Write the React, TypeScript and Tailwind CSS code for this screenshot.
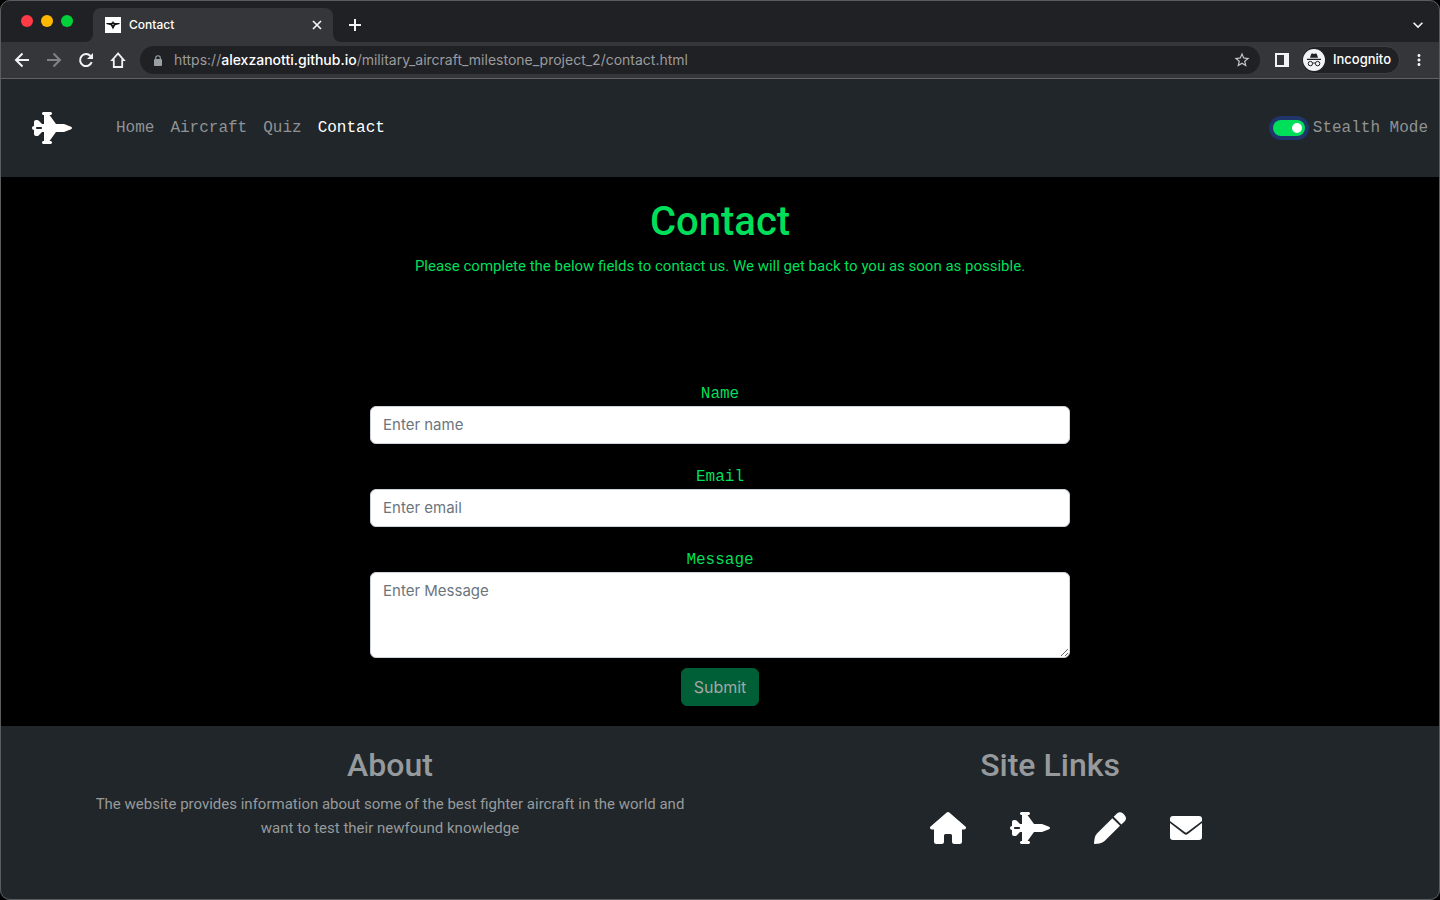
import { useState } from "react";
import type { ReactNode } from "react";
import { FaJetFighter } from "react-icons/fa6";
import { MdStarBorder, MdMoreVert, MdKeyboardArrowDown } from "react-icons/md";

const mono = "font-['Liberation_Mono',monospace]";
const body = "font-['Roboto',sans-serif]";

function ChromeButton({ label, children, className = "" }: { label: string; children: ReactNode; className?: string }) {
  return (
    <button type="button" aria-label={label} className={`flex shrink-0 items-center justify-center text-[#f1f3f4] ${className}`}>
      {children}
    </button>
  );
}

function LineIcon({ children }: { children: ReactNode }) {
  return (
    <svg viewBox="0 0 20 20" className="size-5" fill="none" stroke="currentColor" strokeWidth="2" aria-hidden="true">
      {children}
    </svg>
  );
}

function FaviconIcon() {
  return (
    <svg viewBox="0 0 16 16" className="size-4 bg-white" aria-hidden="true">
      <path d="M8 3.8l.8 1.8 1.4.5 4.3-.1.2 1-4.5 1.2-1.1 2.1L8 12.4l-1.1-2.1-1.1-2.1L1.3 7l.2-1 4.3.1 1.4-.5z" fill="#111" />
      <circle cx="8" cy="7.6" r=".7" fill="#fff" />
    </svg>
  );
}

function LockIcon() {
  return (
    <svg viewBox="0 0 8 11" className="h-[11px] w-2 shrink-0" aria-hidden="true">
      <rect y="4" width="8" height="7" rx="1" fill="#9aa0a6" />
      <path d="M1.7 4.5V3a2.3 2.3 0 0 1 4.6 0v1.5" fill="none" stroke="#9aa0a6" strokeWidth="1.1" />
    </svg>
  );
}

function IncognitoIcon() {
  return (
    <svg viewBox="0 0 22 22" className="size-[22px]" aria-hidden="true">
      <circle cx="11" cy="11" r="11" fill="#f1f3f4" />
      <path d="M7 8.8l1.1-3.6c.2-.7.8-1 1.5-.7l1.4.4 1.4-.4c.7-.3 1.3 0 1.5.7L15 8.8z" fill="#202124" />
      <path d="M4 9.8h14v1.2H4z" fill="#202124" />
      <circle cx="7.4" cy="14.6" r="2.2" fill="none" stroke="#202124" />
      <circle cx="14.6" cy="14.6" r="2.2" fill="none" stroke="#202124" />
      <path d="M9.6 14.4c.9-.6 1.9-.6 2.8 0" fill="none" stroke="#202124" />
    </svg>
  );
}

function HouseIcon() {
  return (
    <svg viewBox="0 0 36 32" className="h-8 w-9" fill="currentColor" aria-hidden="true">
      <path d="M18 0q.7 0 1.3.5L35.4 14.4q1 1 .4 2.2-.5 1-1.8 1H32V29.5q0 2.500-2.500 2.500H24.500Q22 32 22 29.500V23.500Q22 22 20.500 22H15.500Q14 22 14 23.500V29.500Q14 32 11.500 32H6.500Q4 32 4 29.500V17.600H2q-1.300 0-1.800-1-.6-1.200.4-2.200L16.700.5Q17.300 0 18 0z" />
    </svg>
  );
}

function PenIcon() {
  return (
    <svg viewBox="0 0 32 32" className="size-8" fill="currentColor" aria-hidden="true">
      <path d="M18.3 6.2L26 13.8 10.6 29Q8.5 31 5.5 31.4L.8 32Q0 32 0 31.2L.6 26.5Q1 23.6 3 21.5z" />
      <path d="M19.7 4.8L23 1.500Q26-1 29 1.600L30.500 3Q33.200 6 31 9L27.400 12.400z" />
    </svg>
  );
}

function EnvelopeIcon() {
  return (
    <svg viewBox="0 0 32 24" className="h-6 w-8" fill="currentColor" aria-hidden="true">
      <path d="M3 0h26a3 3 0 0 1 3 3v2L17 16.300a1.700 1.700 0 0 1-2 0L0 5V3a3 3 0 0 1 3-3z" />
      <path d="M0 7L14.200 18a2.900 2.900 0 0 0 3.600 0L32 7V21a3 3 0 0 1-3 3H3a3 3 0 0 1-3-3z" />
    </svg>
  );
}

function BrowserBar() {
  return (
    <div className="font-['Inter',sans-serif]">
      <div className="flex h-[42px] items-end bg-[#202124]">
        <div className="flex h-[42px] w-[93px] shrink-0 items-center gap-2 pl-[21px]">
          <span className="size-3 rounded-full bg-[#ff3b47]" />
          <span className="size-3 rounded-full bg-[#ffb900]" />
          <span className="size-3 rounded-full bg-[#00d13b]" />
        </div>
        <div className="relative flex h-[34px] w-60 items-center gap-2 rounded-t-lg bg-[#35363a] px-3">
          <span className="absolute bottom-0 -left-2 size-2 bg-[#35363a]">
            <span className="block size-2 rounded-br-lg bg-[#202124]" />
          </span>
          <span className="absolute -right-2 bottom-0 size-2 bg-[#35363a]">
            <span className="block size-2 rounded-bl-lg bg-[#202124]" />
          </span>
          <FaviconIcon />
          <span className="flex-1 text-xs font-medium text-white">Contact</span>
          <ChromeButton label="Close tab" className="-mr-1.5">
            <LineIcon><path d="M6 6l8 8M14 6l-8 8" strokeWidth="1.7" /></LineIcon>
          </ChromeButton>
        </div>
        <ChromeButton label="New tab" className="ml-3 h-[34px]">
          <LineIcon><path d="M10 4v12M4 10h12" /></LineIcon>
        </ChromeButton>
        <ChromeButton label="Search tabs" className="mr-3 ml-auto h-[34px]">
          <MdKeyboardArrowDown size={20} />
        </ChromeButton>
      </div>
      <div className="flex h-[37px] items-center border-b border-[#5f6164] bg-[#35363a] px-3">
        <div className="flex shrink-0 gap-3">
          <ChromeButton label="Back">
            <LineIcon><path d="M17 10H4.500M10.500 3.500L4 10l6.500 6.500" /></LineIcon>
          </ChromeButton>
          <ChromeButton label="Forward" className="opacity-40">
            <LineIcon><path d="M3 10h12.500M9.500 3.500L16 10l-6.500 6.500" /></LineIcon>
          </ChromeButton>
          <ChromeButton label="Reload">
            <LineIcon>
              <path d="M15.700 12.200A6 6 0 1 1 14.500 6" />
              <path d="M17 3v6h-6z" fill="currentColor" stroke="none" />
            </LineIcon>
          </ChromeButton>
          <ChromeButton label="Home page">
            <LineIcon><path d="M10 3.500L4.200 10.200H5.800V17h8.400v-6.800h1.600z" strokeWidth="1.800" /></LineIcon>
          </ChromeButton>
        </div>
        <div className="ml-3 flex h-7 min-w-0 flex-1 items-center rounded-full bg-[#202124] pr-[9px] pl-[14px]">
          <LockIcon />
          <p className="ml-3 flex-1 truncate text-sm text-[#9a9b9e]">
            https://<span className="font-medium text-white">alexzanotti.github.io</span>/military_aircraft_milestone_project_2/contact.html
          </p>
          <ChromeButton label="Bookmark"><MdStarBorder size={18} className="text-[#c4c6c8]" /></ChromeButton>
        </div>
        <ChromeButton label="Side panel" className="ml-[15px]">
          <svg viewBox="0 0 14 14" className="size-[14px]" aria-hidden="true">
            <path d="M0 0h14v14H0zM2 2v10h7V2z" fill="currentColor" fillRule="evenodd" />
          </svg>
        </ChromeButton>
        <div className="ml-3 flex h-7 shrink-0 items-center gap-2 rounded-full border border-[#3f4044] bg-[#202124] pr-2 pl-px">
          <IncognitoIcon />
          <span className="text-[13px] font-medium text-white">Incognito</span>
        </div>
        <ChromeButton label="Menu" className="ml-[10px]"><MdMoreVert size={18} /></ChromeButton>
      </div>
    </div>
  );
}

const navLinks = [
  { label: "Home", href: "#home" },
  { label: "Aircraft", href: "#aircraft" },
  { label: "Quiz", href: "#quiz" },
];

function SiteHeader() {
  const [stealth, setStealth] = useState(true);
  return (
    <header className={`flex h-[98px] items-center bg-[#202629] pr-3 pl-8 text-base text-[#909294] ${mono}`}>
      <a href="#home" aria-label="Military aircraft" className="mr-11 text-white">
        <FaJetFighter className="h-8 w-10" />
      </a>
      <nav className="flex gap-4">
        {navLinks.map((link) => (
          <a key={link.label} href={link.href}>{link.label}</a>
        ))}
        <a href="#contact" aria-current="page" className="text-white">Contact</a>
      </nav>
      <label className="ml-auto flex items-center gap-2">
        <span className="relative flex h-4 w-8">
          <input
            type="checkbox"
            role="switch"
            checked={stealth}
            onChange={(e) => setStealth(e.target.checked)}
            className="peer h-4 w-8 appearance-none rounded-full bg-[#6c757d] ring-4 ring-[#20366a] checked:bg-[#00df59]"
          />
          <span className="pointer-events-none absolute top-[3px] left-[3px] size-[10px] rounded-full bg-white peer-checked:left-[19px]" />
        </span>
        Stealth Mode
      </label>
    </header>
  );
}

const fieldClass =
  "block w-full rounded-md border border-[#ced4da] bg-white px-3 py-[6px] font-['Inter',sans-serif] text-[15px] leading-6 text-[#212529] placeholder:text-[#6c757d]";
const labelClass = `block text-center text-base leading-6 ${mono}`;

function ContactForm() {
  return (
    <main className="flex-1 bg-black px-4 py-5 text-[#00df59]">
      <h1 className="text-center font-['Roboto',sans-serif] text-[40px] leading-[50px] font-medium">Contact</h1>
      <p className={`mt-[7px] text-center text-[15px] leading-6 ${body}`}>
        Please complete the below fields to contact us. We will get back to you as soon as possible.
      </p>
      <form className="mx-auto mt-[104px] max-w-[700px]" onSubmit={(e) => e.preventDefault()}>
        <label htmlFor="name" className={labelClass}>Name</label>
        <input id="name" type="text" placeholder="Enter name" className={fieldClass} />
        <label htmlFor="email" className={`mt-[21px] ${labelClass}`}>Email</label>
        <input id="email" type="email" placeholder="Enter email" className={fieldClass} />
        <label htmlFor="message" className={`mt-[21px] ${labelClass}`}>Message</label>
        <textarea id="message" rows={3} placeholder="Enter Message" className={fieldClass} />
        <button
          type="submit"
          className="mx-auto mt-[10px] block rounded-md border border-[#005f37] bg-[#005f37] px-3 py-[6px] font-['Inter',sans-serif] text-base leading-6 text-[#a6a6a6]"
        >
          Submit
        </button>
      </form>
    </main>
  );
}

function SiteFooter() {
  const heading = "font-['Roboto',sans-serif] text-[32px] leading-[38px] font-medium";
  return (
    <footer className="grid grid-cols-[13fr_9fr_2fr] bg-[#202629] pt-5 pb-14 text-center text-[#979a9c]">
      <section className="px-20">
        <h2 className={heading}>About</h2>
        <p className={`mt-2 text-[15px] leading-6 ${body}`}>
          The website provides information about some of the best fighter aircraft in the world and want to test their newfound knowledge
        </p>
      </section>
      <section>
        <h2 className={heading}>Site Links</h2>
        <div className="mt-7 flex items-center justify-center gap-11 pl-8 text-white">
          <a href="#home" aria-label="Home"><HouseIcon /></a>
          <a href="#aircraft" aria-label="Aircraft"><FaJetFighter className="h-8 w-10" /></a>
          <a href="#quiz" aria-label="Quiz"><PenIcon /></a>
          <a href="#contact" aria-label="Contact"><EnvelopeIcon /></a>
        </div>
      </section>
    </footer>
  );
}

export default function App() {
  return (
    <div className="min-h-screen bg-black">
      <div className="flex min-h-screen flex-col overflow-hidden rounded-[10px] bg-[#202629] outline -outline-offset-1 outline-[#5a5c5f]">
        <BrowserBar />
        <SiteHeader />
        <ContactForm />
        <SiteFooter />
      </div>
    </div>
  );
}
